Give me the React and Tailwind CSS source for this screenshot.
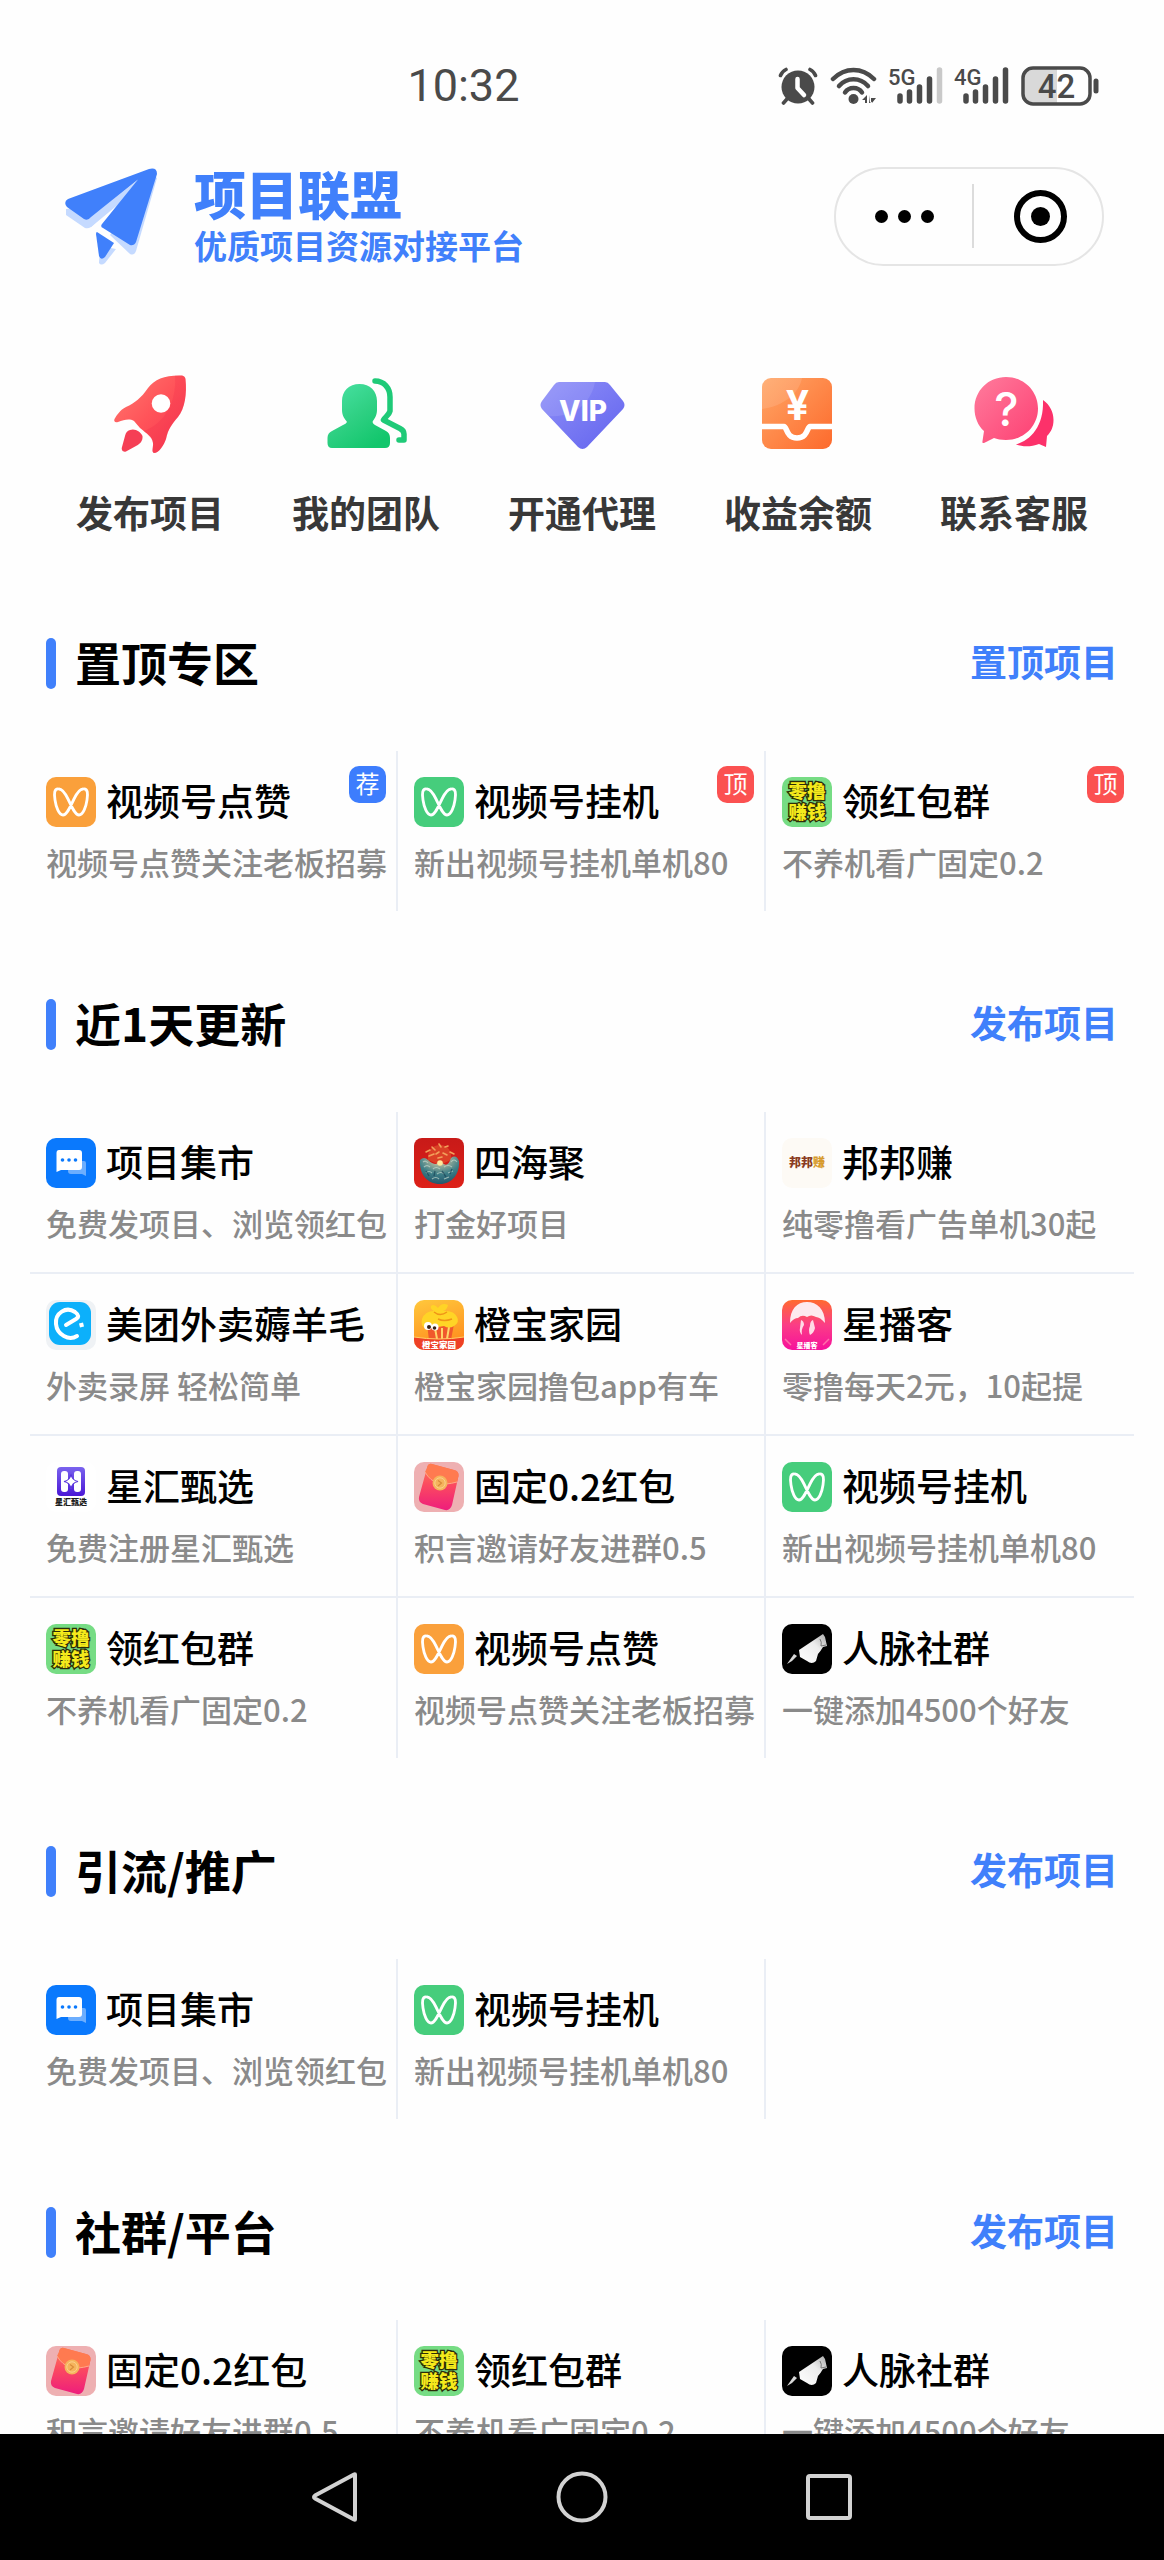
const RocketIcon = () => (
    <svg viewBox="0 0 90 90" className="size-[90px]" aria-hidden="true">
        <defs>
            <linearGradient id="rocket" x1="0" y1="0" x2="1" y2="1">
                <stop offset="0" stopColor="#ff7a70" />
                <stop offset="0.5" stopColor="#ff5359" />
                <stop offset="1" stopColor="#f53653" />
            </linearGradient>
        </defs>
        <path d="M77 5.5C60 5 50 9 43 18C36 28 30 33 21 37C15 40 12 45 9.5 49C8.5 51 10 53 13 52C19 50 24 48 29 51L35 58C42 64 47 66 48 73C48.5 77 46 82 49 83C54 83 59 75 61 69C63 59 67 54 73 47C80 38 82 24 80.5 9Q80 6 77 5.5Z" fill="url(#rocket)" />
        <path d="M77 5.5C80 6 80.5 8 80.5 10C82 24 80 38 73 47C67 54 63 59 61 69C59 75 54 83 49 83C46 82 48.5 77 48 73C47 68 43 65 39 61C58 54 72 34 70 5.5Z" fill="#ee2548" opacity=".2" />
        <circle cx="56" cy="33.5" r="9.3" fill="#fff" />
        <path d="M25 60C30 58 36 62 37.500 66C38 71 35 74 31 76L21 81.5C18 82.5 16 80 17 77L20 66Q21 61 25 60Z" fill="#f53f55" />
    </svg>
);

const TeamIcon = () => (
    <svg viewBox="0 0 90 90" className="size-[90px]" aria-hidden="true">
        <defs>
            <linearGradient id="team" x1="0" y1="0" x2="0.7" y2="1">
                <stop offset="0" stopColor="#4be3a6" />
                <stop offset="0.55" stopColor="#2fd083" />
                <stop offset="1" stopColor="#12c66c" />
            </linearGradient>
        </defs>
        <path d="M38.5 14C28 14 21 21 21 31V40C21 46 24 49 26 52Q25 54 22 55L11 61Q6.5 63 6.5 68V73Q6.5 78 11 78H64Q69 78 69 73V68Q69 63 65 61L54 55Q52 54 51.5 52C53 49 56 46 56 40V31C56 21 49 14 38.5 14Z" fill="url(#team)" />
        <path d="M54 11C63 11 69 18 69 27V41C68 45 65 46 62.5 50L79 58.5Q83 60.5 83 64V70H78" fill="none" stroke="#1fca78" strokeWidth="5.5" strokeLinecap="round" strokeLinejoin="round" />
    </svg>
);

const GemIcon = () => (
    <svg viewBox="0 0 90 90" className="size-[90px]" aria-hidden="true">
        <defs>
            <linearGradient id="gem" x1="0" y1="0" x2="1" y2="1">
                <stop offset="0" stopColor="#8f90f8" />
                <stop offset="1" stopColor="#6263ee" />
            </linearGradient>
        </defs>
        <path d="M22 12H68Q71 12 73 15L86 31Q89 35 86 39L50 77Q45.5 81 41 77L5 39Q2 35 5 31L17 15Q19 12 22 12Z" fill="url(#gem)" />
        <path d="M22 12H58C54 34 36 48 12 46L5 39Q2 35 5 31L17 15Q19 12 22 12Z" fill="#fff" opacity=".1" />
        <text x="46" y="51" textAnchor="middle" fontFamily="Inter, sans-serif" fontWeight="800" fontSize="28" fill="#fff">VIP</text>
    </svg>
);

const BalanceIcon = () => (
    <svg viewBox="0 0 90 90" className="size-[90px]" aria-hidden="true">
        <defs>
            <linearGradient id="balance" x1="0" y1="0" x2="1" y2="1">
                <stop offset="0" stopColor="#ffa666" />
                <stop offset="1" stopColor="#fd6a2c" />
            </linearGradient>
        </defs>
        <rect x="9" y="8" width="70" height="71" rx="9" fill="url(#balance)" />
        <path d="M18 8H49C46 24 30 36 9 39V17Q9 8 18 8Z" fill="#fff" opacity=".12" />
        <path d="M8 56.5H31C34 56.5 33 68 44 68C55 68 54 56.5 57 56.5H80" fill="none" stroke="#fff" strokeWidth="5.5" />
        <text x="44.5" y="50" textAnchor="middle" fontFamily="Inter, sans-serif" fontWeight="700" fontSize="41" fill="#fff">¥</text>
    </svg>
);

const ServiceIcon = () => (
    <svg viewBox="0 0 90 90" className="size-[90px]" aria-hidden="true">
        <defs>
            <linearGradient id="service" x1="0" y1="0" x2="1" y2="1">
                <stop offset="0" stopColor="#ff7c9d" />
                <stop offset="1" stopColor="#fd3f72" />
            </linearGradient>
        </defs>
        <path d="M74 30C81 35 84.5 42 84.5 50C84.5 57 82 62 78 66L77 77L70 74C62 77 54 77 47 74.5C62 70 75 56 74 30Z" fill="#fc316a" />
        <path d="M37 7C55 7 69 21 69 38.5C69 56 55 70 37 70C32 70 28 69 25 68L15 73Q13 73.5 13.5 71L15 61C9 56 5.5 47 5.5 38.5C5.5 21 19 7 37 7Z" fill="url(#service)" />
        <text x="37.5" y="56" textAnchor="middle" fontFamily="Inter, sans-serif" fontWeight="500" fontSize="46" fill="#fff">?</text>
    </svg>
);

const ChannelIcon = ({ color }) => (
    <svg viewBox="0 0 50 50" className="size-[50px] rounded-[10px]" aria-hidden="true">
        <rect width="50" height="50" fill={color} />
        <path d="M13 12C8 11 8 17 9 23C10 30 13 38 17 38C21 38 24 30 28 22C31 16 34 12 37 12C42 11 42 17 41 23C40 30 37 38 33 38C29 38 26 30 22 22C19 16 16 12 13 12Z" fill="none" stroke="#fff" strokeWidth="2.8" />
    </svg>
);

const EarnIcon = () => (
    <svg viewBox="0 0 50 50" className="size-[50px] rounded-[10px]" aria-hidden="true">
        <rect width="50" height="50" fill="#76dc84" />
        <g fontFamily="'Noto Sans CJK SC', sans-serif" fontWeight="900" fontSize="18.5" fill="#f5ea1c" stroke="#2c2c08" strokeWidth="2.6" paintOrder="stroke" textAnchor="middle">
            <text x="25" y="21">零撸</text>
            <text x="25" y="42">赚钱</text>
        </g>
    </svg>
);

const MarketIcon = () => (
    <svg viewBox="0 0 50 50" className="size-[50px] rounded-[10px]" aria-hidden="true">
        <rect width="50" height="50" fill="#0a79fd" />
        <path d="M23 23H38Q40 23 40 25V38L36 36H25Q22 36 22 33Z" fill="#fff" opacity=".4" />
        <path d="M13 12H33Q36 12 36 15V29Q36 32 33 32H15L10.5 34V15Q10.5 12 13 12Z" fill="#fff" />
        <g fill="#0a79fd">
            <circle cx="16.5" cy="22" r="1.8" />
            <circle cx="23" cy="22" r="1.8" />
            <circle cx="29.5" cy="22" r="1.8" />
        </g>
    </svg>
);

const SeaIcon = () => (
    <svg viewBox="0 0 50 50" className="size-[50px] rounded-[8px]" aria-hidden="true">
        <defs>
            <radialGradient id="sea" cx="0.5" cy="0.1" r="0.9">
                <stop offset="0" stopColor="#ffe9a0" />
                <stop offset="0.25" stopColor="#9fb09a" />
                <stop offset="0.6" stopColor="#3e7f88" />
                <stop offset="1" stopColor="#24566a" />
            </radialGradient>
            <linearGradient id="seaBg" x1="0" y1="0" x2="0" y2="1">
                <stop offset="0" stopColor="#c81a18" />
                <stop offset="1" stopColor="#dd2018" />
            </linearGradient>
        </defs>
        <rect width="50" height="50" fill="url(#seaBg)" />
        <path d="M14 22C13 12 19 7 26 7C34 7 38 13 37 22L26 27Z" fill="#e0502c" opacity=".7" />
        <path d="M6 22Q10 18 14 22T22 26Q26 23 30 26T37 20Q42 16 45 23C46 36 38 46 26 46C13 46 5 36 6 22Z" fill="url(#sea)" />
        <path d="M10 29Q13 26 16 29M19 31Q22 28 26 31M30 29Q34 26 38 29M12 35Q15 32 18 35M23 36Q27 33 30 36M34 35L39 33M18 41Q22 38 25 41M30 41L35 39M9 24Q12 22 14 25M37 24Q40 20 43 24" fill="none" stroke="#c5d9cd" strokeWidth="1.2" opacity=".7" />
        <path d="M12 33L15 38M21 33L20 38M28 33L32 39M38 31L36 36" stroke="#153e50" strokeWidth="1.4" opacity=".6" />
        <path d="M12 14L16 12M18 9L21 12M25 6L27 9M31 9L34 8M36 14L40 16M15 18L20 16M22 16L25 14M29 15L33 17M24 20L28 19" stroke="#f2a05a" strokeWidth="1.6" strokeLinecap="round" />
        <circle cx="26" cy="25" r="2.8" fill="#ffe89c" />
    </svg>
);

const BangIcon = () => (
    <svg viewBox="0 0 50 50" className="size-[50px] rounded-[10px]" aria-hidden="true">
        <rect width="50" height="50" fill="#fdfaf5" />
        <text x="25" y="29" textAnchor="middle" fontFamily="'Noto Sans CJK SC', sans-serif" fontWeight="900" fontSize="12" fill="#8a3b22">
            邦邦<tspan fill="#d79a2b">赚</tspan>
        </text>
    </svg>
);

const TakeoutIcon = () => (
    <svg viewBox="0 0 50 50" className="size-[50px] rounded-[10px]" aria-hidden="true">
        <rect width="50" height="50" fill="#eff2f5" />
        <rect x="3" y="2" width="42" height="43" rx="11" fill="#0cb0fb" />
        <path d="M31 36C23 41 11 35 10 24C9 13 20 6 29 12C33 15 33 17 30 19L20 25" fill="none" stroke="#fff" strokeWidth="4" strokeLinecap="round" strokeLinejoin="round" />
        <path d="M33 23.5L37 22.5L38 26.5L34 27.5Z" fill="#fff" />
    </svg>
);

const OrangeIcon = () => (
    <svg viewBox="0 0 50 50" className="size-[50px] rounded-[10px]" aria-hidden="true">
        <defs>
            <linearGradient id="orange" x1="0" y1="0" x2="0.3" y2="1">
                <stop offset="0" stopColor="#ffc83c" />
                <stop offset="1" stopColor="#ff8f1f" />
            </linearGradient>
        </defs>
        <rect width="50" height="50" fill="url(#orange)" />
        <path d="M13 24H40L37 40H15Z" fill="#f0582c" />
        <path d="M21 28L23 39M28 28V39M35 27L33 39" stroke="#ffd46a" strokeWidth="2" />
        <path d="M17 6Q20 3 24 8Q28 2 34 5Q33 10 29 11Q40 10 43 17Q46 22 40 26Q35 29 30 26L12 29Q6 26 8 19Q11 11 20 11Q16 9 17 6Z" fill="#ffd426" />
        <path d="M20 12Q26 17 33 12M24 19Q30 22 38 19" fill="none" stroke="#f09418" strokeWidth="1.5" />
        <circle cx="14" cy="26" r="4" fill="#fff" />
        <circle cx="21" cy="27" r="3.5" fill="#fff" />
        <circle cx="15" cy="27" r="2" fill="#3a2418" />
        <circle cx="20.500" cy="28" r="1.8" fill="#3a2418" />
        <path d="M0 37Q25 41 50 37V50H0Z" fill="#ee4026" />
        <path d="M0 37Q25 41 50 37" fill="none" stroke="#ffcf66" />
        <text x="25" y="48" textAnchor="middle" fontFamily="'Noto Sans CJK SC', sans-serif" fontWeight="900" fontSize="8.5" fill="#fff">橙宝家园</text>
    </svg>
);

const PodcastIcon = () => (
    <svg viewBox="0 0 50 50" className="size-[50px] rounded-[10px]" aria-hidden="true">
        <defs>
            <linearGradient id="podcast" x1="0" y1="0" x2="0" y2="1">
                <stop offset="0" stopColor="#ff6a30" />
                <stop offset="0.5" stopColor="#fb3d86" />
                <stop offset="1" stopColor="#f6119c" />
            </linearGradient>
        </defs>
        <rect width="50" height="50" fill="url(#podcast)" />
        <path d="M8 23C8 9 15 2 25 2C35 2 43 9 43 23Q38 17 34 17Q29 14 25 17Q20 14 16 18Q12 18 8 23Z" fill="#fde9ee" />
        <path d="M19 20Q22 21 22 25Q19 29 20 35Q17 32 18 28ZM31 20Q28 21 28 26Q26 30 28 35Q32 33 33 28Z" fill="#ffdbe6" />
        <path d="M3 39L9 45M47 39L41 45" stroke="#ff6fa9" strokeWidth="1.5" />
        <text x="25" y="48" textAnchor="middle" fontFamily="'Noto Sans CJK SC', sans-serif" fontWeight="900" fontSize="7" fill="#fff">星播客</text>
    </svg>
);

const StarIcon = () => (
    <svg viewBox="0 0 50 50" className="size-[50px] rounded-[10px]" aria-hidden="true">
        <defs>
            <linearGradient id="star" x1="0" y1="0" x2="0" y2="1">
                <stop offset="0" stopColor="#7a63ee" />
                <stop offset="1" stopColor="#4a17d6" />
            </linearGradient>
        </defs>
        <rect width="50" height="50" fill="#fff" />
        <rect x="11" y="5" width="28" height="29" rx="4" fill="url(#star)" />
        <rect x="15" y="9" width="7" height="21" rx="3" fill="#fff" />
        <rect x="28" y="9" width="7" height="21" rx="3" fill="#fff" />
        <path d="M25 12Q26 18.5 32 19.5Q26 20.5 25 27Q24 20.5 18 19.5Q24 18.5 25 12Z" fill="#fff" stroke="#5a36dd" strokeWidth="1.2" />
        <text x="25" y="43" textAnchor="middle" fontFamily="'Noto Sans CJK SC', sans-serif" fontWeight="900" fontSize="8" fill="#1b1b1b">星汇甄选</text>
    </svg>
);

const RedPacketIcon = () => (
    <svg viewBox="0 0 50 50" className="size-[50px] rounded-[10px]" aria-hidden="true">
        <defs>
            <linearGradient id="packet" x1="0" y1="0" x2="0" y2="1">
                <stop offset="0" stopColor="#ff7d55" />
                <stop offset="0.45" stopColor="#fb4a60" />
                <stop offset="1" stopColor="#ee1d7c" />
            </linearGradient>
        </defs>
        <rect width="50" height="50" fill="#eeb0b2" />
        <path d="M18 2L40 8Q45 9 44.5 14L38 43Q36 49 31 48L9 42Q4 40 5 35L13 6Q14 1 18 2Z" fill="url(#packet)" />
        <path d="M18 2L40 8Q45 9 44.5 14L43 20Q30 23 25 22Q16 18 11 10L13 6Q14 1 18 2Z" fill="#ff7a50" />
        <path d="M11 10Q16 19 25 21.5Q32 23 43 20" fill="none" stroke="#ffa98a" />
        <circle cx="26" cy="21" r="7.5" fill="#f5b45c" />
        <circle cx="26" cy="21" r="5.2" fill="none" stroke="#fbd08c" />
        <path d="M24 18.5L27.5 21L24 24" fill="none" stroke="#d88b3a" strokeWidth="1.2" />
    </svg>
);

const NetworkIcon = () => (
    <svg viewBox="0 0 50 50" className="size-[50px] rounded-[10px]" aria-hidden="true">
        <defs>
            <linearGradient id="feather" x1="0" y1="1" x2="1" y2="0">
                <stop offset="0" stopColor="#fff" />
                <stop offset="0.6" stopColor="#ececec" />
                <stop offset="1" stopColor="#aaa" />
            </linearGradient>
        </defs>
        <rect width="50" height="50" fill="#000" />
        <path d="M17 26L41 10L43 13L45 22L41 23Q38 28 36 30L34 37Q30 41 25 37L18 33Z" fill="url(#feather)" />
        <path d="M38 15Q40 18 39 22L44 21" fill="none" stroke="#777" />
        <path d="M5 40L12 30L15 32L10 37Z" fill="#d8d8d8" />
    </svg>
);

const like = { title: '视频号点赞', desc: '视频号点赞关注老板招募', icon: <ChannelIcon color="#faa03b" /> };
const hangup = { title: '视频号挂机', desc: '新出视频号挂机单机80', icon: <ChannelIcon color="#46cd7c" /> };
const redGroup = { title: '领红包群', desc: '不养机看广固定0.2', icon: <EarnIcon /> };
const market = { title: '项目集市', desc: '免费发项目、浏览领红包', icon: <MarketIcon /> };
const fixed = { title: '固定0.2红包', desc: '积言邀请好友进群0.5', icon: <RedPacketIcon /> };
const network = { title: '人脉社群', desc: '一键添加4500个好友', icon: <NetworkIcon /> };

const sections = [
    {
        title: '置顶专区',
        action: '置顶项目',
        items: [{ ...like, badge: '荐' }, { ...hangup, badge: '顶' }, { ...redGroup, badge: '顶' }],
    },
    {
        title: '近1天更新',
        action: '发布项目',
        items: [
            market,
            { title: '四海聚', desc: '打金好项目', icon: <SeaIcon /> },
            { title: '邦邦赚', desc: '纯零撸看广告单机30起', icon: <BangIcon /> },
            { title: '美团外卖薅羊毛', desc: '外卖录屏 轻松简单', icon: <TakeoutIcon /> },
            { title: '橙宝家园', desc: '橙宝家园撸包app有车', icon: <OrangeIcon /> },
            { title: '星播客', desc: '零撸每天2元，10起提', icon: <PodcastIcon /> },
            { title: '星汇甄选', desc: '免费注册星汇甄选', icon: <StarIcon /> },
            fixed,
            hangup,
            redGroup,
            like,
            network,
        ],
    },
    { title: '引流/推广', action: '发布项目', items: [market, hangup] },
    { title: '社群/平台', action: '发布项目', items: [fixed, redGroup, network] },
];

const shortcuts = [
    { label: '发布项目', icon: <RocketIcon /> },
    { label: '我的团队', icon: <TeamIcon /> },
    { label: '开通代理', icon: <GemIcon /> },
    { label: '收益余额', icon: <BalanceIcon /> },
    { label: '联系客服', icon: <ServiceIcon /> },
];

const Signal = ({ label, full }) => (
    <svg viewBox="0 0 54 38" className="h-[38px] w-[54px] overflow-visible" aria-hidden="true">
        <text x="-1" y="18" fontFamily="Roboto, sans-serif" fontWeight="500" fontSize="22" fill="#4a4a4a">{label}</text>
        <g stroke="#4a4a4a" strokeWidth="5.5" strokeLinecap="round">
            <path d="M11 29V34M20.5 25V34M30.5 20V34M40.5 12V34" />
            <path d="M50.5 3V34" stroke={full ? '#4a4a4a' : '#c9c9c9'} />
        </g>
    </svg>
);

const StatusBar = () => (
    <div className="flex items-center justify-between pt-[60px] pr-16 pl-[35%] text-[#4a4a4a]">
        <span className="font-['Roboto',sans-serif] text-[45px] leading-[52px]">10:32</span>
        <div className="flex items-center gap-3">
            <svg viewBox="0 0 40 38" className="h-[38px] w-10" aria-hidden="true">
                <circle cx="20" cy="20" r="16.5" fill="#4a4a4a" />
                <path d="M2.5 8.5Q4 4.5 8 2.5M37.5 8.5Q36 4.5 32 2.5M9 32L5.500 36M31 32L34.5 36" stroke="#4a4a4a" strokeWidth="3.6" strokeLinecap="round" fill="none" />
                <path d="M19.5 12V21L26 28" stroke="#fff" strokeWidth="4.5" strokeLinecap="round" strokeLinejoin="round" fill="none" />
            </svg>
            <svg viewBox="0 0 47 38" className="h-[38px] w-[47px]" aria-hidden="true">
                <g fill="none" stroke="#4a4a4a" strokeWidth="4.5" strokeLinecap="round">
                    <path d="M3 12C15 0 32 0 44 12" />
                    <path d="M9 19C17 10 30 10 38 19" />
                    <path d="M15 25.5C19 19.5 28 19.5 32 25.5" />
                </g>
                <circle cx="23.500" cy="32" r="5" fill="#4a4a4a" />
                <path d="M37 28V36H35V33H32ZM39 28V36L41 36V31H46L40 36ZM41 31H46L42 36Z" fill="#4a4a4a" />
            </svg>
            <Signal label="5G" />
            <Signal label="4G" full />
            <svg viewBox="0 0 79 40" className="h-10 w-[79px]" aria-hidden="true">
                <path d="M12 2H36V38H12Q2 38 2 28V12Q2 2 12 2Z" fill="#d9d9d9" />
                <rect x="2" y="2" width="67" height="36" rx="10" fill="none" stroke="#4a4a4a" strokeWidth="3.5" />
                <path d="M75 15V25" stroke="#4a4a4a" strokeWidth="5" strokeLinecap="round" />
                <text x="35.5" y="32" textAnchor="middle" fontFamily="Roboto, sans-serif" fontWeight="500" fontSize="33" fill="#4a4a4a">42</text>
            </svg>
        </div>
    </div>
);

const Header = () => (
    <header className="mt-13 flex items-center justify-between pr-[60px] pl-16">
        <div className="flex items-center gap-9">
            <svg viewBox="0 0 94 100" className="h-[100px] w-[94px]" aria-hidden="true">
                <g fill="#c5daff">
                    <path d="M2 43L2 49L21 62Q24 63 27 61L42 47L30 40Z" />
                    <path d="M46 69L66 88Q70 90 72 85L93 12L88 8Z" />
                    <path d="M36 80L35 97Q37 100 41 97L52 83Z" />
                    <path d="M75 13L24 53L27 61L56 37Z" />
                </g>
                <path d="M85 3L4 33Q-1 36 3 41L20 53Q24 55 27 51L74 13.5L38 58Q36 61 39 62L66 79Q70 80 72 76L93 8Q93 1 85 3Z" fill="#4080fb" />
                <path d="M33 66L50 77L41 91Q37 95 35 90L32 68Q32 66 33 66Z" fill="#4080fb" />
            </svg>
            <div className="text-[#4080fb]">
                <h1 className="text-[52px] leading-[58px] font-black">项目联盟</h1>
                <p className="text-[33px] leading-[46px] font-bold">优质项目资源对接平台</p>
            </div>
        </div>
        <div className="flex h-[99px] w-[270px] items-center rounded-full border-2 border-[#e5e5e5]">
            <button type="button" aria-label="更多" className="flex w-[136px] items-center justify-center gap-[10px]">
                <span className="size-[13px] rounded-full bg-black" />
                <span className="size-[13px] rounded-full bg-black" />
                <span className="size-[13px] rounded-full bg-black" />
            </button>
            <span className="h-16 w-[2px] bg-[#dcdcdc]" />
            <button type="button" aria-label="关闭" className="flex flex-1 items-center justify-center pl-1">
                <span className="flex size-[53px] items-center justify-center rounded-full border-[6px] border-black">
                    <span className="size-[19px] rounded-full bg-black" />
                </span>
            </button>
        </div>
    </header>
);

const ProjectCell = ({ item, lastCol, lastRow }) => (
    <a
        href="#"
        className={`relative block border-[#eaeef5] pt-[26px] pb-[26px] pl-4 ${lastCol ? '' : 'border-r-2'} ${lastRow ? '' : 'border-b-2'}`}
    >
        <div className="flex items-center gap-[10px]">
            {item.icon}
            <span className="pb-1 text-[37px] leading-[46px] font-medium whitespace-nowrap text-black">{item.title}</span>
        </div>
        <p className="mt-3 text-[31px] leading-[46px] font-medium whitespace-nowrap text-[#8a8a8a]">{item.desc}</p>
        {item.badge && (
            <span
                className={`absolute top-[15px] right-[10px] flex size-[37px] items-center justify-center rounded-[10px] pb-1 text-2xl leading-none text-white ${item.badge === '荐' ? 'bg-[#3d7dfd]' : 'bg-[#fb5151]'}`}
            >
                {item.badge}
            </span>
        )}
    </a>
);

const Section = ({ title, action, items }) => {
    const lastRowStart = Math.floor((items.length - 1) / 3) * 3;

    return (
        <section className="pb-[88px]">
            <div className="flex h-[51px] items-center justify-between pr-[46px] pl-[46px]">
                <div className="flex items-center gap-[19px]">
                    <span className="h-[51px] w-[10px] rounded-full bg-[#4080fb]" />
                    <h2 className="pb-1.5 text-[46px] leading-[50px] font-bold text-black">{title}</h2>
                </div>
                <a href="#" className="pb-1.5 text-[37px] leading-[50px] font-bold text-[#4080fb]">{action}</a>
            </div>
            <div className="mx-[30px] mt-[62px] grid grid-cols-3">
                {items.map((item, index) => (
                    <ProjectCell
                        key={item.title}
                        item={item}
                        lastCol={index % 3 === 2}
                        lastRow={index >= lastRowStart}
                    />
                ))}
            </div>
        </section>
    );
};

const SystemNav = () => (
    <nav className="flex h-[126px] shrink-0 items-center justify-center gap-[196px] bg-black">
        <button type="button" aria-label="返回">
            <svg viewBox="0 0 52 52" className="size-[52px]" fill="none" stroke="#d2d2d2" strokeWidth="4" strokeLinejoin="round">
                <path d="M47 3.5V48.5Q47 49 46 48.5L7 27.5Q5 26 7 24.5L46 3.5Q47 3 47 3.5Z" />
            </svg>
        </button>
        <button type="button" aria-label="主页">
            <svg viewBox="0 0 52 52" className="size-[52px]" fill="none" stroke="#d2d2d2" strokeWidth="4">
                <circle cx="26" cy="26" r="23.5" />
            </svg>
        </button>
        <button type="button" aria-label="最近任务">
            <svg viewBox="0 0 52 52" className="size-[52px]" fill="none" stroke="#d2d2d2" strokeWidth="4">
                <rect x="4" y="5" width="42" height="42" rx="2" />
            </svg>
        </button>
    </nav>
);

const App = () => (
    <div className="flex h-screen flex-col bg-[#fefefe] font-['Noto_Sans_CJK_SC',sans-serif]">
        <main className="min-h-0 flex-1 overflow-hidden">
            <StatusBar />
            <Header />

            {/* Shortcuts */}
            <div className="mt-[102px] grid grid-cols-5 px-[42px]">
                {shortcuts.map((s) => (
                    <a key={s.label} href="#" className="flex flex-col items-center gap-[27px]">
                        {s.icon}
                        <span className="text-[37px] leading-[50px] font-bold text-[#383838]">{s.label}</span>
                    </a>
                ))}
            </div>

            <div className="mt-[101px]">
                {sections.map((section) => (
                    <Section key={section.title} {...section} />
                ))}
            </div>
        </main>
        <SystemNav />
    </div>
);

export default App;
